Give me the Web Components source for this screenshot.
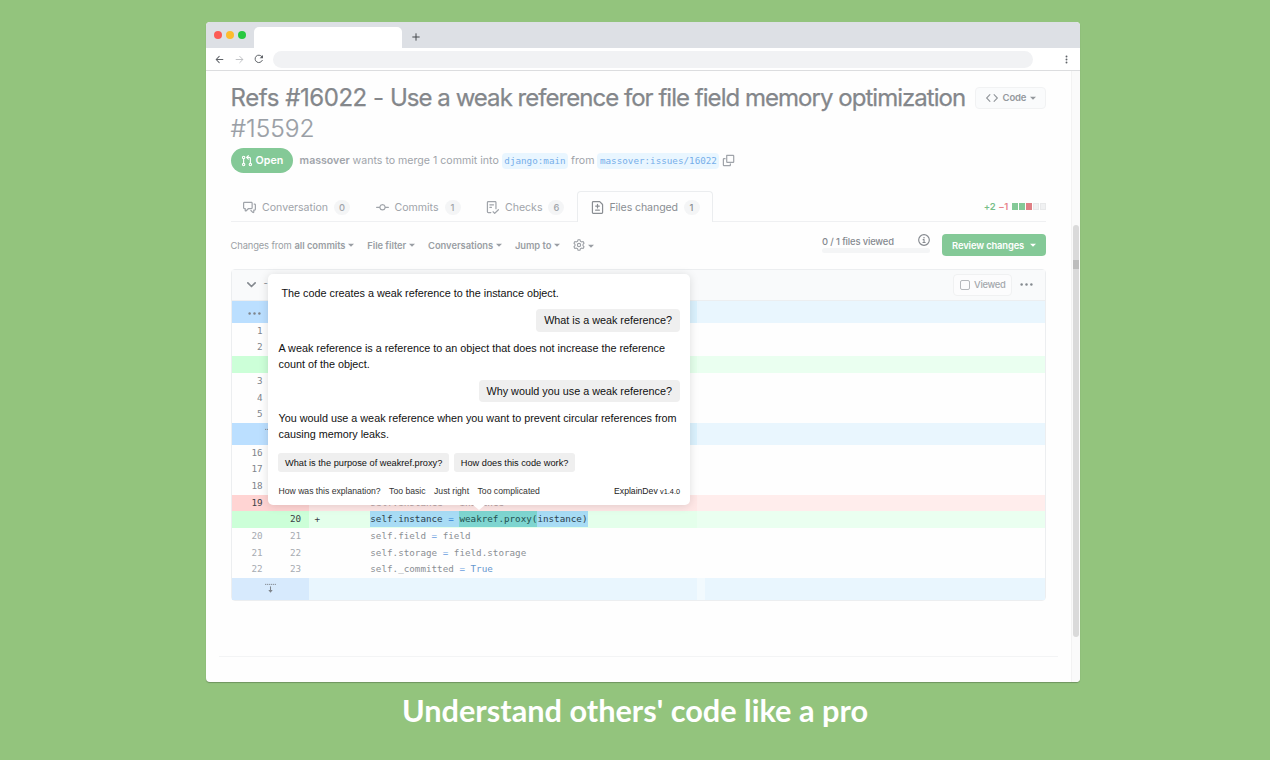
<!DOCTYPE html>
<html lang="en">
<head>
<meta charset="utf-8">
<title>ExplainDev</title>
<style>
    body {
        margin: 0;
        background: #93c47d;
        font-family: Inter, "Liberation Sans", sans-serif;
    }
</style>
</head>
<body>
<promo-slide caption="Understand others' code like a pro">
    <browser-window>
        <pull-header></pull-header>
        <pull-tabs></pull-tabs>
        <diff-toolbar></diff-toolbar>
        <diff-file>
            <explain-popup slot="popup"></explain-popup>
        </diff-file>
        <page-rule></page-rule>
    </browser-window>
</promo-slide>

<script>
// small helper, every element below clones its own template
function define(name, html, setup) {
    const template = document.createElement('template');
    template.innerHTML = html;
    window.customElements.define(name, class extends HTMLElement {
        constructor() {
            super();
            this.attachShadow({ mode: 'open' });
            this.shadowRoot.appendChild(template.content.cloneNode(true));
        }
        connectedCallback() {
            if (setup) setup(this, this.shadowRoot);
        }
    });
}

const line = (d, w = 1.5) => `<path d="${d}" fill="none" stroke="currentColor" stroke-width="${w}" stroke-linecap="round" stroke-linejoin="round"/>`;
const solid = d => `<path d="${d}" fill="currentColor"/>`;

const icons = {
    back: line('M14 8H2.5M7.5 2.5 2 8l5.5 5.5', 1.8),
    forward: line('M2 8h11.5M8.5 2.5 14 8l-5.5 5.5', 1.6),
    reload: line('M13.3 10.2A6 6 0 1 1 12.5 4', 1.6) + solid('M14.4 1.4v5.4H9z'),
    plus: line('M8 1.5v13M1.5 8h13', 2),
    kebab: '<g fill="currentColor"><circle cx="8" cy="2.7" r="1.7"/><circle cx="8" cy="8" r="1.7"/><circle cx="8" cy="13.3" r="1.7"/></g>',
    dots: '<g fill="currentColor"><circle cx="2" cy="8" r="1.5"/><circle cx="8" cy="8" r="1.5"/><circle cx="14" cy="8" r="1.5"/></g>',
    code: line('M5.2 3.5.9 8l4.3 4.5M10.8 3.5 15.1 8l-4.3 4.5'),
    caret: solid('M0 4.5h16L8 12.5z'),
    chevron: line('M3.5 6 8 10.5 12.5 6', 2),
    pull: line('M3.5 5v6M7.5 3.2H11a1.5 1.5 0 0 1 1.5 1.5V11M9.8.9 7.5 3.2l2.3 2.3') +
        '<g fill="none" stroke="currentColor" stroke-width="1.5"><circle cx="3.5" cy="3.2" r="1.6"/><circle cx="3.5" cy="12.8" r="1.6"/><circle cx="12.5" cy="12.8" r="1.6"/></g>',
    copy: line('M5.8 1.7h7.9a.7.7 0 0 1 .7.7v7.2a.7.7 0 0 1-.7.7H6.5a.7.7 0 0 1-.7-.7zM3.8 5.7H2.4a.7.7 0 0 0-.7.7v7.2c0 .4.3.7.7.7h7.2a.7.7 0 0 0 .7-.7v-1.4'),
    talk: solid('M1.75 1h8.5c.966 0 1.75.784 1.75 1.75v5.5A1.75 1.75 0 0 1 10.25 10H7.061l-2.574 2.573A1.458 1.458 0 0 1 2 11.543V10h-.25A1.75 1.75 0 0 1 0 8.25v-5.5C0 1.784.784 1 1.75 1ZM1.5 2.75v5.5c0 .138.112.25.25.25h1a.75.75 0 0 1 .75.75v2.19l2.72-2.72a.749.749 0 0 1 .53-.22h3.5a.25.25 0 0 0 .25-.25v-5.5a.25.25 0 0 0-.25-.25h-8.5a.25.25 0 0 0-.25.25Zm13 2a.25.25 0 0 0-.25-.25h-.5a.75.75 0 0 1 0-1.5h.5c.966 0 1.75.784 1.75 1.75v5.5A1.75 1.75 0 0 1 14.25 12H14v1.543a1.458 1.458 0 0 1-2.487 1.03L9.22 12.28a.749.749 0 0 1 1.06-1.06l2.22 2.22v-2.19a.75.75 0 0 1 .75-.75h1a.25.25 0 0 0 .25-.25Z'),
    commit: solid('M11.93 8.5a4.002 4.002 0 0 1-7.86 0H.75a.75.75 0 0 1 0-1.5h3.32a4.002 4.002 0 0 1 7.86 0h3.32a.75.75 0 0 1 0 1.5Zm-1.43-.75a2.5 2.5 0 1 0-5 0 2.5 2.5 0 0 0 5 0Z'),
    checks: solid('M2.5 1.75v11.5c0 .138.112.25.25.25h3.17a.75.75 0 0 1 0 1.5H2.75A1.75 1.75 0 0 1 1 13.25V1.75C1 .784 1.784 0 2.75 0h8.5C12.216 0 13 .784 13 1.75v7.736a.75.75 0 0 1-1.5 0V1.75a.25.25 0 0 0-.25-.25h-8.5a.25.25 0 0 0-.25.25Zm13.274 9.537-4.557 4.45a.75.75 0 0 1-1.055-.008l-1.943-1.95a.75.75 0 0 1 1.062-1.058l1.419 1.425 4.026-3.932a.75.75 0 1 1 1.048 1.074ZM4.75 4h4.5a.75.75 0 0 1 0 1.5h-4.5a.75.75 0 0 1 0-1.5ZM4 7.75A.75.75 0 0 1 4.75 7h2a.75.75 0 0 1 0 1.5h-2A.75.75 0 0 1 4 7.75Z'),
    diff: solid('M1 1.75C1 .784 1.784 0 2.75 0h7.586c.464 0 .909.184 1.237.513l2.914 2.914c.329.328.513.773.513 1.237v9.586A1.75 1.75 0 0 1 13.25 16H2.75A1.75 1.75 0 0 1 1 14.25Zm1.75-.25a.25.25 0 0 0-.25.25v12.5c0 .138.112.25.25.25h10.5a.25.25 0 0 0 .25-.25V4.664a.25.25 0 0 0-.073-.177l-2.914-2.914a.25.25 0 0 0-.177-.073ZM8 3.25a.75.75 0 0 1 .75.75v1.5h1.5a.75.75 0 0 1 0 1.5h-1.5v1.5a.75.75 0 0 1-1.5 0V7h-1.5a.75.75 0 0 1 0-1.5h1.5V4A.75.75 0 0 1 8 3.25Zm-3 8a.75.75 0 0 1 .75-.75h4.5a.75.75 0 0 1 0 1.5h-4.5a.75.75 0 0 1-.75-.75Z'),
    gear: line('M6.75.9h2.5L9.85 2.93 11.47 3.86 13.52 3.37 14.77 5.54 13.32 7.06V8.94L14.77 10.46 13.52 12.63 11.47 12.14 9.85 13.07 9.25 15.1H6.75L6.15 13.07 4.53 12.14 2.48 12.63 1.23 10.46 2.68 8.94V7.06L1.23 5.54 2.48 3.37 4.53 3.86 6.15 2.93Z', 1.4) +
        '<circle cx="8" cy="8" r="2.2" fill="none" stroke="currentColor" stroke-width="1.4"/>',
    info: '<circle cx="8" cy="8" r="7.1" fill="none" stroke="currentColor" stroke-width="1.5"/><circle cx="8" cy="4.9" r="1" fill="currentColor"/>' + line('M6.8 7.5h1.3v3.7M6.6 11.3h3', 1.4),
    expand: '<path d="M0 2h16" fill="none" stroke="currentColor" stroke-width="1.3" stroke-dasharray="1.9 1"/>' + line('M8 5.5v7', 1.5) + solid('M4.8 10h6.4L8 14z')
};

class OctIcon extends HTMLElement {
    constructor() {
        super();
        this.attachShadow({ mode: 'open' });
    }
    connectedCallback() {
        const size = this.getAttribute('size') || 12;
        this.shadowRoot.innerHTML = `
            <style>
            :host { display: block; flex: none; width: ${size}px; height: ${size}px; white-space: normal; }
            svg { display: block; width: 100%; height: 100%; overflow: visible; }
            </style>
            <svg viewBox="0 0 16 16">${icons[this.getAttribute('name')]}</svg>
        `;
    }
}
window.customElements.define('oct-icon', OctIcon);

define('promo-slide', `
    <style>
    :host {
        display: flex;
        flex-direction: column;
        align-items: center;
        box-sizing: border-box;
        height: 760px;
        padding: 22px 0 0 16px;
        overflow: hidden;
    }
    p {
        margin: 10px 16px 0 0;
        font: 700 30.7px/37px Lato, sans-serif;
        color: #fff;
        white-space: nowrap;
    }
    </style>
    <slot></slot>
    <p></p>
`, (el, root) => {
    root.querySelector('p').textContent = el.getAttribute('caption');
});

define('browser-window', `
    <style>
    :host {
        display: flex;
        flex-direction: column;
        width: 874px;
        height: 660px;
        border-radius: 4px;
        background: #fefefe;
        overflow: hidden;
        box-shadow: 0 1px 1px rgba(0, 0, 0, .25);
    }
    .tabs {
        display: flex;
        height: 26px;
        background: #dde0e5;
    }
    .lights {
        display: flex;
        gap: 4.4px;
        padding: 9px 0 0 7.5px;
        width: 40.5px;
    }
    .lights i {
        width: 8px;
        height: 8px;
        border-radius: 50%;
    }
    .tab {
        width: 148px;
        margin-top: 5px;
        border-radius: 5px 5px 0 0;
        background: #fff;
    }
    .tabs oct-icon {
        margin: 11px 0 0 9.5px;
        color: #45484c;
    }
    .bar {
        display: flex;
        align-items: center;
        height: 22px;
        padding: 0 8px 0 9px;
        color: #5f6368;
        background: #fff;
        border-bottom: 1px solid #dcdddf;
    }
    .bar oct-icon + oct-icon { margin-left: 10.5px; }
    .url {
        width: 760px;
        height: 17px;
        margin: 0 28.5px 0 9px;
        border-radius: 9px;
        background: #f1f2f4;
    }
    .view {
        display: flex;
        flex: 1;
    }
    main {
        flex: 1;
        padding: 11.5px 0 0 24.6px;
    }
    .track {
        width: 8px;
        border-left: 1px solid #f2f2f2;
        background: #fafafa;
    }
    .thumb {
        width: 6px;
        height: 412px;
        margin: 154px 0 0 1px;
        border-radius: 3px;
        background: linear-gradient(#dadada 35px, #bdbdbd 35px, #bdbdbd 44px, #dadada 44px);
    }
    </style>
    <div class="tabs">
        <div class="lights">
            <i style="background:#fc5b55"></i>
            <i style="background:#fdbc2e"></i>
            <i style="background:#28c840"></i>
        </div>
        <div class="tab"></div>
        <oct-icon name="plus" size="8"></oct-icon>
    </div>
    <div class="bar">
        <oct-icon name="back" size="9"></oct-icon>
        <oct-icon name="forward" size="9" style="color:#b9bbbe"></oct-icon>
        <oct-icon name="reload" size="10"></oct-icon>
        <div class="url"></div>
        <oct-icon name="kebab" size="9"></oct-icon>
    </div>
    <div class="view">
        <main><slot></slot></main>
        <div class="track"><div class="thumb"></div></div>
    </div>
`);

define('pull-header', `
    <style>
    :host {
        display: block;
        width: 815px;
        color: #a0a4aa;
    }
    .top {
        display: flex;
        justify-content: space-between;
        align-items: flex-start;
    }
    h1 {
        margin: -1px 0 0;
        font-size: 24px;
        font-weight: 400;
        line-height: 31px;
        letter-spacing: -.97px;
        color: #84878b;
        -webkit-text-stroke: .25px #84878b;
        white-space: nowrap;
    }
    h1 em { font-style: normal; letter-spacing: -.45px; }
    h1 span {
        display: block;
        font-size: 24.5px;
        font-weight: 300;
        letter-spacing: 0;
        color: #9a9fa6;
        -webkit-text-stroke: .2px #9a9fa6;
    }
    .code {
        display: flex;
        align-items: center;
        box-sizing: border-box;
        width: 71px;
        height: 22px;
        margin-top: 4px;
        padding-left: 10px;
        border: 1px solid #f1f2f3;
        border-radius: 4px;
        background: #fafbfc;
        font-size: 9.5px;
        font-weight: 600;
        letter-spacing: -.2px;
        color: #94989d;
    }
    .code b { margin: 0 4px 0 5px; font-weight: 600; }
    .meta {
        display: flex;
        align-items: center;
        height: 25px;
        margin-top: 4.5px;
        font-size: 10.6px;
        white-space: pre;
    }
    .open {
        display: flex;
        align-items: center;
        box-sizing: border-box;
        width: 62.5px;
        height: 25px;
        margin-right: 6.5px;
        padding-left: 10px;
        gap: 3px;
        border-radius: 13px;
        background: #84c997;
        font-weight: 600;
        font-size: 10.7px;
        color: #fff;
    }
    .ref {
        height: 16px;
        padding: 0 2.5px;
        margin: 0 3px;
        border-radius: 4px;
        background: #e9f6ff;
        font: 9.25px/16px "DejaVu Sans Mono", monospace;
        letter-spacing: 0;
        color: #76aeea;
    }
    </style>
    <div class="top">
        <h1><em>Refs #16022 - </em>Use a weak reference for file field memory optimization<span>#15592</span></h1>
        <div class="code"><oct-icon name="code" size="12"></oct-icon><b>Code</b><oct-icon name="caret" size="6"></oct-icon></div>
    </div>
    <div class="meta"><div class="open"><oct-icon name="pull" size="12"></oct-icon>Open</div><b style="font-weight:600">massover</b> wants to merge 1 commit into<span class="ref">django:main</span>from<span class="ref">massover:issues/16022</span><oct-icon name="copy" size="13"></oct-icon></div>
`);

define('pull-tab', `
    <style>
    :host {
        display: flex;
        align-items: center;
        box-sizing: border-box;
        height: 31px;
        padding: 1px 13px 0 12.5px;
        gap: 6px;
        font-size: 10.6px;
        letter-spacing: -.03px;
        color: #a0a4aa;
    }
    :host([active]) {
        padding: 0 12px 0 12.5px;
        border: 1px solid #ebedef;
        border-bottom: 0;
        border-radius: 4px 4px 0 0;
        background: #fefefe;
        color: #8a8e93;
        height: 31px;
        gap: 5.5px;
        letter-spacing: -.1px;
    }
    .count {
        width: 16px;
        height: 15px;
        border-radius: 8px;
        background: #f4f5f6;
        font-size: 9.3px;
        font-weight: 500;
        line-height: 15px;
        text-align: center;
    }
    </style>
    <oct-icon size="13"></oct-icon>
    <slot></slot>
    <div class="count"></div>
`, (el, root) => {
    root.querySelector('oct-icon').setAttribute('name', el.getAttribute('icon'));
    root.querySelector('oct-icon').connectedCallback();
    root.querySelector('.count').textContent = el.getAttribute('count');
});

define('pull-tabs', `
    <style>
    :host {
        display: flex;
        width: 815.5px;
        height: 30px;
        margin-top: 18px;
        border-bottom: 1px solid #eff0f2;
    }
    .stat {
        display: flex;
        align-items: center;
        margin-left: auto;
        padding-top: 1px;
        font-size: 9.5px;
        font-weight: 600;
        letter-spacing: -.3px;
        color: #78be89;
    }
    .stat em { margin: 0 3px; font-style: normal; color: #e8838a; }
    .stat i {
        box-sizing: border-box;
        width: 6px;
        height: 7px;
        margin-left: 1px;
        background: #84c997;
    }
    </style>
    <pull-tab icon="talk" count="0">Conversation</pull-tab>
    <pull-tab icon="commit" count="1">Commits</pull-tab>
    <pull-tab icon="checks" count="6">Checks</pull-tab>
    <pull-tab icon="diff" count="1" active>Files changed</pull-tab>
    <div class="stat">+2<em>−1</em><i></i><i></i><i style="background:#df7f84"></i><i style="background:#f0f1f2;border:1px solid #e8e9ea"></i><i style="background:#f0f1f2;border:1px solid #e8e9ea"></i></div>
`);

define('diff-toolbar', `
    <style>
    :host {
        display: flex;
        align-items: center;
        width: 815.5px;
        height: 46.6px;
        font-size: 9.4px;
        letter-spacing: -.05px;
        color: #9a9ea4;
    }
    .item {
        display: flex;
        align-items: center;
        gap: 3px;
        margin-right: 12.8px;
        font-weight: 600;
    }
    .item span { font-weight: 400; letter-spacing: -.15px; }
    .viewed {
        width: 108px;
        margin: -2px 12px 0 auto;
        color: #85898f;
    }
    .viewed div {
        display: flex;
        justify-content: space-between;
        height: 13px;
        line-height: 14px;
        font-weight: 500;
        letter-spacing: -.14px;
    }
    .viewed oct-icon { margin-top: -1px; }
    .viewed i {
        display: block;
        height: 5px;
        border-radius: 3px;
        background: #f4f5f6;
    }
    button {
        display: flex;
        align-items: center;
        justify-content: space-between;
        width: 104px;
        height: 22px;
        padding: 0 10px;
        border: 0;
        border-radius: 4px;
        background: #84c997;
        font: 600 9.4px Inter, sans-serif;
        letter-spacing: -.13px;
        color: #fff;
    }
    </style>
    <div class="item"><span>Changes from</span>all commits<oct-icon name="caret" size="6"></oct-icon></div>
    <div class="item">File filter<oct-icon name="caret" size="6"></oct-icon></div>
    <div class="item">Conversations<oct-icon name="caret" size="6"></oct-icon></div>
    <div class="item">Jump to<oct-icon name="caret" size="6"></oct-icon></div>
    <div class="item"><oct-icon name="gear" size="12"></oct-icon><oct-icon name="caret" size="6" style="margin-top:2px"></oct-icon></div>
    <div class="viewed"><div>0 / 1 files viewed<oct-icon name="info" size="12"></oct-icon></div><i></i></div>
    <button>Review changes<oct-icon name="caret" size="6"></oct-icon></button>
`);

define('diff-row', `
    <style>
    :host {
        display: grid;
        grid-template-columns: 38.5px 38.5px 1fr;
        height: 16.7px;
        font: 9.25px/16.7px "DejaVu Sans Mono", monospace;
        color: #7f858c;
        white-space: pre;
        --gutter: transparent;
        --near: transparent;
        --far: transparent;
    }
    :host([kind="hunk"]) { height: 21.7px; --gutter: #bbdfff; --near: #daf1fd; --far: #e9f6fe; }
    :host([kind="more"]) { height: 21.7px; --gutter: #d7eafd; --near: #e9f6fe; --far: #e9f6fe; }
    :host([kind="add"]) { --gutter: #ccffd8; --near: #e4ffeb; --far: #eafff0; color: #3a4046; }
    :host([kind="del"]) { --gutter: #ffd4d3; --near: #ffe7e6; --far: #ffedec; color: #3a4046; }
    :host([muted]) { color: #a6abb1; }
    .num {
        padding-right: 7.5px;
        text-align: right;
        background: var(--gutter);
    }
    .code {
        padding-left: 6px;
        background: linear-gradient(90deg, var(--near) 388px, var(--far) 388px);
    }
    :host([kind="more"]) .code { background: linear-gradient(90deg, #e9f6fe 388px, #f2fafe 388px, #f2fafe 396px, #e9f6fe 396px); }
    </style><div class="num"></div><div class="num"></div><div class="code"><slot></slot></div>`, (el, root) => {
    const nums = root.querySelectorAll('.num');
    nums[0].textContent = el.getAttribute('old') || '';
    nums[1].textContent = el.getAttribute('new') || '';
    const icon = el.getAttribute('icon');
    if (!icon) return;
    // the icon takes both gutter columns unless it belongs to the first one
    const first = icon === 'dots';
    const box = nums[0];
    box.style.cssText = `display:flex;align-items:center;justify-content:center;padding:${first ? '3px 0 0 7px' : '0'};` + (first ? '' : 'grid-column:span 2;');
    if (!first) nums[1].remove();
    box.innerHTML = `<oct-icon name="${icon}" size="${first ? 13 : 11}"></oct-icon>`;
});

define('diff-file', `
    <style>
    :host {
        display: block;
        position: relative;
        box-sizing: border-box;
        width: 815.5px;
        height: 332px;
        border: 1px solid #eceef0;
        border-radius: 4px;
    }
    header {
        display: flex;
        align-items: center;
        height: 31.5px;
        padding-left: 13.5px;
        background: #f9fafb;
        border-bottom: 1px solid #eceef0;
        box-sizing: border-box;
        font-size: 9.4px;
        color: #84898f;
    }
    .minus { margin: -4px 0 0 5.5px; }
    .viewed {
        display: flex;
        align-items: center;
        box-sizing: border-box;
        width: 59px;
        height: 22px;
        margin: 0 8px 0 auto;
        padding-left: 6px;
        gap: 4px;
        border: 1px solid #f0f1f2;
        border-radius: 4px;
        background: #fcfcfd;
        font-weight: 500;
        letter-spacing: -.3px;
        color: #a3a7ac;
    }
    .viewed i {
        width: 8px;
        height: 8px;
        border: 1px solid #b5b8bc;
        border-radius: 2px;
    }
    header > oct-icon:last-child { margin-right: 12px; }
    .plain { color: #8b8f94; }
    .faint { color: #b59ea0; }
    .op { color: #6a9fe0; }
    .const { color: #6698cf; }
    mark { display: inline-block; height: 16px; background: #a8dcf5; color: #2b3f4d; }
    mark .op { color: #3183d8; }
    mark b { display: inline-block; height: 16px; font-weight: 400; background: #7ed5d0; color: #22504f; }
    slot {
        display: block;
        position: absolute;
        left: 36.4px;
        top: 4.2px;
    }
    </style>
    <header>
        <oct-icon name="chevron" size="13"></oct-icon><span class="minus">-</span>
        <div class="viewed"><i></i>Viewed</div>
        <oct-icon name="dots" size="13"></oct-icon>
    </header>
    <diff-row kind="hunk" icon="dots"></diff-row>
    <diff-row old="1"></diff-row>
    <diff-row old="2"></diff-row>
    <diff-row kind="add"></diff-row>
    <diff-row old="3"></diff-row>
    <diff-row old="4"></diff-row>
    <diff-row old="5"></diff-row>
    <diff-row kind="hunk" icon="expand"></diff-row>
    <diff-row old="16"></diff-row>
    <diff-row old="17"></diff-row>
    <diff-row old="18"></diff-row>
    <diff-row kind="del" old="19"><span class="faint">          self.instance = instance</span></diff-row>
    <diff-row kind="add" new="20">+         <mark>self.instance <span class="op">=</span> <b>weakref.proxy(</b>instance)</mark></diff-row>
    <diff-row muted old="20" new="21"><span class="plain">          self.field <span class="op">=</span> field</span></diff-row>
    <diff-row muted old="21" new="22"><span class="plain">          self.storage <span class="op">=</span> field.storage</span></diff-row>
    <diff-row muted old="22" new="23"><span class="plain">          self._committed <span class="op">=</span> <span class="const">True</span></span></diff-row>
    <diff-row kind="more" icon="expand"></diff-row>
    <slot name="popup"></slot>
`);

define('explain-popup', `
    <style>
    :host {
        display: flex;
        flex-direction: column;
        position: relative;
        box-sizing: border-box;
        width: 422.5px;
        height: 231.5px;
        padding: 11.5px 10.5px 0;
        border-radius: 5px;
        background: #fff;
        box-shadow: 0 1px 10px rgba(0, 0, 0, .13);
        font: 10.8px/16px "Liberation Sans", Arial, sans-serif;
        color: #111;
    }
    :host::after {
        content: "";
        position: absolute;
        left: 205px;
        top: 100%;
        border: 6px solid transparent;
        border-top: 5px solid #fff;
        border-bottom: 0;
    }
    p { margin: 0; white-space: nowrap; }
    .ask {
        align-self: flex-end;
        box-sizing: border-box;
        height: 22.5px;
        padding: 0 8px;
        margin: 8px 0;
        border-radius: 4px;
        background: #efefef;
        line-height: 23px;
    }
    .more {
        display: flex;
        gap: 5.5px;
        margin-top: 11px;
        font-size: 9.22px;
    }
    .more span {
        height: 19px;
        padding: 0 6.5px;
        border-radius: 3px;
        background: #efefef;
        line-height: 20px;
    }
    footer {
        display: flex;
        gap: 8.5px;
        margin-top: 11px;
        font-size: 8.63px;
        color: #333;
    }
    footer span:last-child { margin-left: auto; color: #222; }
    small { font-size: 7.3px; }
    </style>
    <p style="padding-left:3px">The code creates a weak reference to the instance object.</p>
    <div class="ask">What is a weak reference?</div>
    <p>A weak reference is a reference to an object that does not increase the reference<br>count of the object.</p>
    <div class="ask">Why would you use a weak reference?</div>
    <p>You would use a weak reference when you want to prevent circular references from<br>causing memory leaks.</p>
    <div class="more"><span>What is the purpose of weakref.proxy?</span><span>How does this code work?</span></div>
    <footer><span>How was this explanation?</span><span>Too basic</span><span>Just right</span><span>Too complicated</span><span>ExplainDev <small>v1.4.0</small></span></footer>
`);

define('page-rule', `
    <style>
    :host {
        display: block;
        width: 839px;
        height: 1px;
        margin: 55px 0 0 -12px;
        background: #f3f4f5;
    }
    </style>
`);
</script>
</body>
</html>
